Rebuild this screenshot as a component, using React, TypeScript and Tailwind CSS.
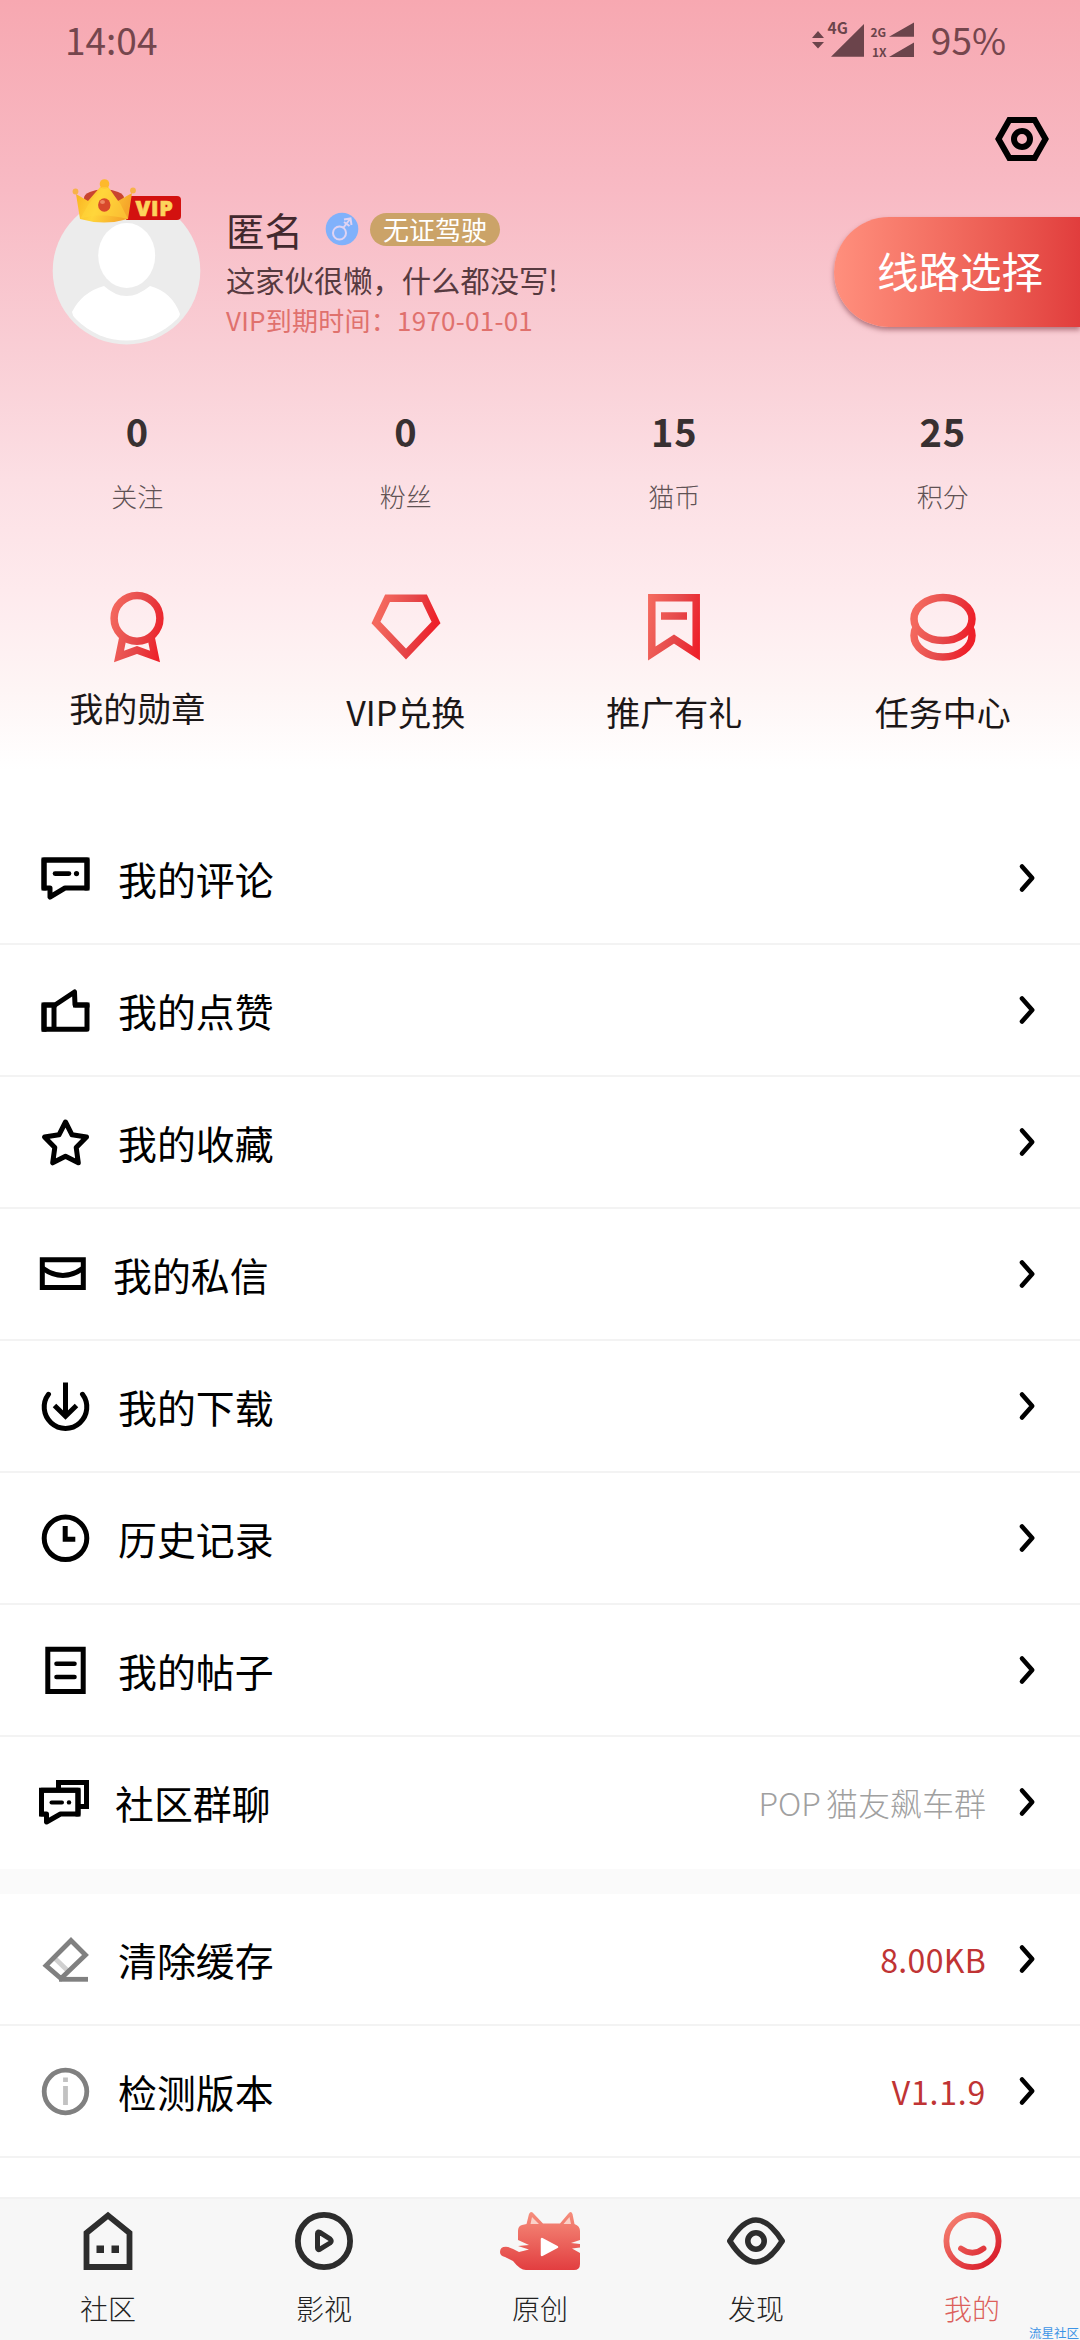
import React from "react";

const INK = "#000";

function Glyph({ children, color = INK, width = 5 }: { children: React.ReactNode; color?: string; width?: number }) {
  return (
    <svg viewBox="0 0 60 60" className="size-[60px] shrink-0" fill="none" stroke={color} strokeWidth={width} strokeLinejoin="miter">
      {children}
    </svg>
  );
}

function Chevron() {
  return (
    <svg viewBox="0 0 20 32" className="ml-[31px] h-8 w-5 shrink-0" fill="none" stroke="#000" strokeWidth="4.6" strokeLinecap="round" strokeLinejoin="round">
      <path d="M5 4.5 15.2 16 5 27.5" />
    </svg>
  );
}

const icons = {
  comment: (
    <Glyph>
      <path d="M9 12H52V40H30L15 49V40H9Z" strokeLinejoin="round" />
      <path d="M9 12H52V40M9 40V12" strokeLinecap="square" />
      <path d="M20 25.6H34" strokeLinecap="round" strokeWidth="4.6" />
      <circle cx="41.5" cy="25.6" r="2.6" fill={INK} stroke="none" />
    </Glyph>
  ),
  like: (
    <Glyph>
      <path d="M9 25H20L39.5 12 40 25H52V49.2H9Z" strokeLinejoin="round" />
      <path d="M9 49.2V25H19M40.5 25H52" strokeLinecap="square" />
      <path d="M19 25V49" />
    </Glyph>
  ),
  star: (
    <Glyph>
      <path d="M30.5 10 37 22.8 51.5 25 41.2 35.5 43.3 50.8 30.5 44.3 17.7 50.8 19.8 35.5 9.5 25 24 22.8Z" strokeLinejoin="round" />
    </Glyph>
  ),
  mail: (
    <Glyph>
      <path d="M7.3 15.7H48.3V43.6H7.3Z" />
      <path d="M7.3 24Q28 39 48.3 24" />
    </Glyph>
  ),
  download: (
    <Glyph>
      <path d="M13.5 18.3A21.3 21.3 0 1 0 47.5 18.3" strokeLinecap="round" />
      <path d="M30.5 6.5V40M19.5 29.5 30.5 40.2 41.5 29.5" />
    </Glyph>
  ),
  clock: (
    <Glyph>
      <circle cx="30.5" cy="30.3" r="21.3" />
      <path d="M30.2 18V31.2H40.3" />
    </Glyph>
  ),
  post: (
    <Glyph>
      <path d="M12.8 9.2H48.2V51.5H12.8Z" />
      <path d="M21.5 23.7H39.5M21.5 37H39.5" strokeLinecap="round" strokeWidth="4.6" />
    </Glyph>
  ),
  group: (
    <Glyph>
      <path d="M23.5 18V10.5H51.5V34.5H43" />
      <path d="M6.5 18.2H43V42H25.5L11.5 50V42H6.5Z" strokeLinejoin="round" />
      <path d="M6.5 42V18.2H43V42" strokeLinecap="square" />
      <path d="M16.5 30.4H27" strokeLinecap="round" strokeWidth="4" />
      <circle cx="34" cy="30.4" r="2.2" fill={INK} stroke="none" />
    </Glyph>
  ),
  eraser: (
    <Glyph color="#808080" width={4.8}>
      <path d="M19 28.5 33 42" stroke="#d0d0d0" />
      <path d="M36 11.5 50.5 26 26 49.5 11 36.5Z" />
      <path d="M24 50.3H53" />
    </Glyph>
  ),
  info: (
    <Glyph color="#808080" width={4.8}>
      <circle cx="30.5" cy="30.5" r="21.3" />
      <path d="M30.5 16.5V21M30.5 25V44" stroke="#c2c2c2" />
    </Glyph>
  ),
};

type Row = { icon: keyof typeof icons; label: string; shift?: "mail" | "group"; value?: string; valueClass?: string };

const mainRows: Row[] = [
  { icon: "comment", label: "我的评论" },
  { icon: "like", label: "我的点赞" },
  { icon: "star", label: "我的收藏" },
  { icon: "mail", label: "我的私信", shift: "mail" },
  { icon: "download", label: "我的下载" },
  { icon: "clock", label: "历史记录" },
  { icon: "post", label: "我的帖子" },
  { icon: "group", label: "社区群聊", shift: "group", value: "POP 猫友飙车群", valueClass: "font-light text-[#a0a0a0] [word-spacing:-2px]" },
];

const systemRows: Row[] = [
  { icon: "eraser", label: "清除缓存", value: "8.00KB", valueClass: "text-[#c03434] tracking-[0.3px]" },
  { icon: "info", label: "检测版本", value: "V1.1.9", valueClass: "text-[#c03434] tracking-[0.8px]" },
];

function MenuRow({ row, last }: { row: Row; last?: boolean }) {
  const margin = row.shift === "mail" ? "ml-[18px]" : row.shift === "group" ? "ml-[20px]" : "ml-[23px]";
  return (
    <div className={`flex h-[132px] items-center border-b-2 pr-[43px] pl-[35px] ${last ? "border-transparent" : "border-[#f3f3f3]"}`}>
      {icons[row.icon]}
      <span className={`${margin} grow text-[38.9px] leading-none text-black`}>{row.label}</span>
      {row.value && <span className={`text-[32px] leading-none ${row.valueClass}`}>{row.value}</span>}
      <Chevron />
    </div>
  );
}

function StatusBar() {
  return (
    <div className="flex h-[78px] items-center justify-between pr-[74px] pl-[65px] text-[37px] leading-none text-[#75464d]">
      <span>14:04</span>
      <div className="flex items-center">
        <svg viewBox="810 14 108 50" className="mr-[13px] h-[50px] w-[108px] overflow-visible" fill="#6b444b" fontFamily="'Noto Sans CJK SC', sans-serif" fontWeight="700">
          <path d="M812 38 818 31 824 38ZM812 42H824L818 48.5Z" />
          <path d="M831 56.7 864 24V56.7ZM889 36.7 914 22.5V36.7ZM889 57 914 42.5V57Z" />
          <text x="827.5" y="34" fontSize="15.5">4G</text>
          <text x="870.5" y="37" fontSize="12">2G</text>
          <text x="872" y="57" fontSize="12">1X</text>
        </svg>
        <span>95%</span>
      </div>
    </div>
  );
}

function Avatar() {
  return (
    <svg viewBox="50 178 154 170" className="h-[170px] w-[154px] shrink-0">
      <defs>
        <linearGradient id="gold" x1="0" y1="0" x2="1" y2="0.3">
          <stop offset="0" stopColor="#f9ae1d" />
          <stop offset="0.5" stopColor="#ffd53a" />
          <stop offset="1" stopColor="#f6a62a" />
        </linearGradient>
        <clipPath id="face">
          <circle cx="126.5" cy="270" r="70.5" />
        </clipPath>
      </defs>
      <circle cx="126.5" cy="270.7" r="73.8" fill="#ececec" />
      <ellipse cx="126.7" cy="255.5" rx="28.5" ry="32.5" fill="#fff" />
      <path d="M104 286Q126 306 150 286Q172 292 180 314L170 345H82L72 312Q82 292 104 286Z" fill="#fff" clipPath="url(#face)" />
      <path d="M130 196H177Q181 196 181 200V216Q181 220 177 220H126Z" fill="#d3110f" />
      <ellipse cx="104" cy="198" rx="20" ry="8.5" fill="#c9452f" />
      <path d="M76 194 88 201 102 185H107L118 201 132 193 128 219Q104 226 80 219Z" fill="url(#gold)" />
      <circle cx="104.5" cy="184" r="4.8" fill="#fdb92c" />
      <circle cx="75.5" cy="191.5" r="2.9" fill="#f7b24a" />
      <circle cx="133" cy="190.5" r="2.9" fill="#f7b24a" />
      <path d="M102 187 88 205 80 219Q100 212 128 219L120 203 107 187Z" fill="#ffd83c" opacity="0.5" />
      <ellipse cx="104.3" cy="205" rx="6.2" ry="6.8" fill="#d8492b" />
      <ellipse cx="102.5" cy="202" rx="2.5" ry="2" fill="#ee8661" />
      <text x="135.5" y="215.6" fontFamily="'Open Sans', sans-serif" fontWeight="800" fontSize="21.5" letterSpacing="0.7" fill="#fdd45c" stroke="#fdd45c" strokeWidth="0.6">VIP</text>
    </svg>
  );
}

function Profile() {
  return (
    <div className="flex h-[172px] pl-[50px]">
      <Avatar />
      <div className="ml-[22px] flex grow flex-col pt-[29px]">
        <div className="flex h-11 items-center">
          <span className="text-[38.5px] leading-none text-[#42292e]">匿名</span>
          <svg viewBox="0 0 34 34" className="ml-[22px] size-[34px]" fill="none" stroke="#dfd3f2" strokeWidth="2">
            <circle cx="17" cy="17" r="16.3" fill="#80b1fb" stroke="none" />
            <circle cx="14.5" cy="21" r="6.5" />
            <path d="M18.5 15.5 25 7M19 7.5 25.5 6.5 26.5 13M19 10 24.5 14" />
          </svg>
          <span className="ml-[11px] flex h-[33px] w-[130px] items-center justify-center rounded-full bg-[#cba368] text-[26px] leading-none text-white">无证驾驶</span>
        </div>
        <div className="mt-[14px] text-[29.3px] leading-none text-[#573a40]">这家伙很懒，什么都没写!</div>
        <div className="mt-[13px] text-[26px] leading-none tracking-[0.25px] text-[#e0716d]">VIP到期时间：1970-01-01</div>
      </div>
      <div className="mt-[39px] flex h-[110px] w-[246px] items-center rounded-l-full bg-linear-to-r from-[#ff8f7d] to-[#e13d3d] pb-[3px] pl-[43px] text-[41.5px] leading-none text-white shadow-[0_3px_5px_rgba(120,50,60,0.55)]">
        线路选择
      </div>
    </div>
  );
}

const stats = [
  ["0", "关注"],
  ["0", "粉丝"],
  ["15", "猫币"],
  ["25", "积分"],
];

function RedIcon({ children }: { children: React.ReactNode }) {
  return (
    <svg viewBox="0 0 80 80" className="size-20" fill="none" stroke="url(#red)" strokeWidth="7.5">
      {children}
    </svg>
  );
}

const shortcuts = [
  {
    label: "我的勋章",
    raised: true,
    icon: (
      <RedIcon>
        <circle cx="40" cy="31.3" r="22.9" />
        <path d="M26 50 22 69.5 40 63 58 69.5 54 50" />
      </RedIcon>
    ),
  },
  { label: "VIP兑换", icon: <RedIcon><path d="M21.5 11.3H58.5L70 35.5 40 67 10 35.5Z" /></RedIcon> },
  { label: "推广有礼", icon: <RedIcon><path d="M17.8 10.8H62.2V66.5L40 52 17.8 66.5ZM27 29H53" /></RedIcon> },
  {
    label: "任务中心",
    icon: (
      <RedIcon>
        <ellipse cx="40" cy="32" rx="29" ry="21.500" />
        <ellipse cx="40" cy="48.500" rx="29" ry="21.500" clipPath="url(#coin)" />
      </RedIcon>
    ),
  },
];

const tabs = [
  {
    label: "社区",
    icon: (
      <Glyph color="#2d2d2d" width={5.8}>
        <path d="M30 4.5 51.5 22V56H8.5V22Z" />
        <path d="M18.5 34.5H26V42H18.5ZM33.5 34.5H41V42H33.5Z" fill="#2d2d2d" stroke="none" />
      </Glyph>
    ),
  },
  {
    label: "影视",
    icon: (
      <Glyph color="#2d2d2d" width={5.8}>
        <circle cx="30" cy="30" r="26.1" />
        <path d="M23.5 22.5Q23.5 20 26 21.5L36 27.8Q38.5 30 36 32L26 38.2Q23.5 39.5 23.5 37Z" strokeWidth="5" strokeLinejoin="round" />
      </Glyph>
    ),
  },
  {
    label: "原创",
    icon: (
      <svg viewBox="496 2208 90 66" className="-mt-px ml-[2px] h-[66px] w-[90px]">
        <defs>
          <linearGradient id="cat" x1="0" y1="0" x2="0" y2="1">
            <stop offset="0" stopColor="#f68e7c" />
            <stop offset="1" stopColor="#e23e40" />
          </linearGradient>
        </defs>
        <path
          d="M522 2225 526.5 2224 529 2214Q531 2210 534 2214L543 2223.5H560L568 2214Q571 2210 572.5 2214L574.5 2224Q580 2226 580 2231V2240L571 2243 580 2244V2247.5L572 2248.5 580 2253V2264Q580 2270 574 2270H526Q520 2270 513 2261L505 2257Q500 2256 500 2252Q500 2246 508 2247Q514 2249 519 2252L529 2249.5 518 2246 529 2245 518 2240V2231Q518 2226 522 2225Z"
          fill="url(#cat)"
        />
        <path d="M532 2217 539 2224H530.5ZM569.5 2217 571 2224H563.5Z" fill="#fbd2c9" />
        <path d="M542 2239V2255L557 2247Z" fill="#fff" stroke="#fff" strokeWidth="2.5" strokeLinejoin="round" />
      </svg>
    ),
  },
  {
    label: "发现",
    icon: (
      <Glyph color="#2d2d2d" width={5.6}>
        <path d="M3.8 30Q17 9 30 9T56.2 30Q43 51 30 51T3.8 30Z" strokeLinejoin="round" />
        <circle cx="30" cy="30" r="8.2" />
      </Glyph>
    ),
  },
  {
    label: "我的",
    active: true,
    icon: (
      <Glyph color="url(#smile)" width={5.8}>
        <defs>
          <linearGradient id="smile" gradientUnits="userSpaceOnUse" x1="5" y1="5" x2="52" y2="52">
            <stop offset="0" stopColor="#f68473" />
            <stop offset="1" stopColor="#d91d2b" />
          </linearGradient>
        </defs>
        <circle cx="30.5" cy="30" r="26.1" />
        <path d="M19 37.5Q30.5 46 41.5 37.5" strokeLinecap="round" />
      </Glyph>
    ),
  },
];

export default function App() {
  return (
    <div
      className="relative flex h-[2340px] w-[1080px] flex-col overflow-hidden bg-white font-['Noto_Sans_CJK_SC',sans-serif]"
      lang="zh-CN"
    >
      <svg className="absolute size-0">
        <defs>
          <linearGradient id="red" gradientUnits="userSpaceOnUse" x1="12" y1="30" x2="68" y2="42">
            <stop offset="0" stopColor="#f4695e" />
            <stop offset="0.55" stopColor="#e5484a" />
            <stop offset="1" stopColor="#ee2029" />
          </linearGradient>
          <clipPath id="coin">
            <path d="M0 38H12C16 51 28 53 40 53S64 51 68 38H80V80H0Z" />
          </clipPath>
        </defs>
      </svg>

      <header className="h-[813px] shrink-0 bg-[linear-gradient(to_bottom,#f7a8b1_0px,#f8bac4_190px,#f9ced5_350px,#fcdfe4_480px,#feeaed_590px,#fef5f5_690px,#ffffff_770px)]">
        <StatusBar />
        <div className="flex h-[100px] items-center justify-end pt-[22px] pr-[30px]">
          <svg viewBox="0 0 56 56" className="size-14" fill="none" stroke="#000" strokeWidth="6">
            <path d="M15.3 9H40.7L51.5 28 40.7 47H15.3L4.5 28Z" />
            <circle cx="28" cy="28" r="8" />
          </svg>
        </div>
        <Profile />
        <div className="mt-[57px] grid grid-cols-4 px-[3px]">
          {stats.map(([value, label]) => (
            <div key={label} className="flex flex-col items-center">
              <span className="text-[38px] leading-[48px] font-bold tracking-[0.8px] text-[#383031]">{value}</span>
              <span className="mt-6 text-[26px] leading-[34px] font-light text-[#5f5254]">{label}</span>
            </div>
          ))}
        </div>
        <div className="mt-[74px] grid grid-cols-4 px-[3px]">
          {shortcuts.map((s) => (
            <div key={s.label} className="flex flex-col items-center">
              {s.icon}
              <span className={`${s.raised ? "mt-[24px]" : "mt-[28px]"} text-[34px] leading-[34px] text-[#1c1718]`}>{s.label}</span>
            </div>
          ))}
        </div>
      </header>

      <main className="h-[1384px] shrink-0 overflow-hidden">
        {mainRows.map((row, i) => (
          <MenuRow key={row.label} row={row} last={i === mainRows.length - 1} />
        ))}
        <div className="h-[25px] bg-[#fafafa]" />
        {systemRows.map((row) => (
          <MenuRow key={row.label} row={row} />
        ))}
      </main>

      <nav className="grid grow grid-cols-5 border-t-2 border-[#f2f2f2] bg-[#f7f7f7]">
        {tabs.map((t) => (
          <div key={t.label} className="flex flex-col items-center pt-3">
            <div className="flex h-[60px] items-center">{t.icon}</div>
            <span className={`mt-5 text-[28px] leading-[34px] font-light ${t.active ? "text-[#dc5f5b]" : "text-[#222]"}`}>{t.label}</span>
          </div>
        ))}
      </nav>
      <span className="absolute top-[2325px] left-[1029px] text-[12.5px] leading-[15px] whitespace-nowrap text-[#3d94e6]">流星社区</span>
    </div>
  );
}
